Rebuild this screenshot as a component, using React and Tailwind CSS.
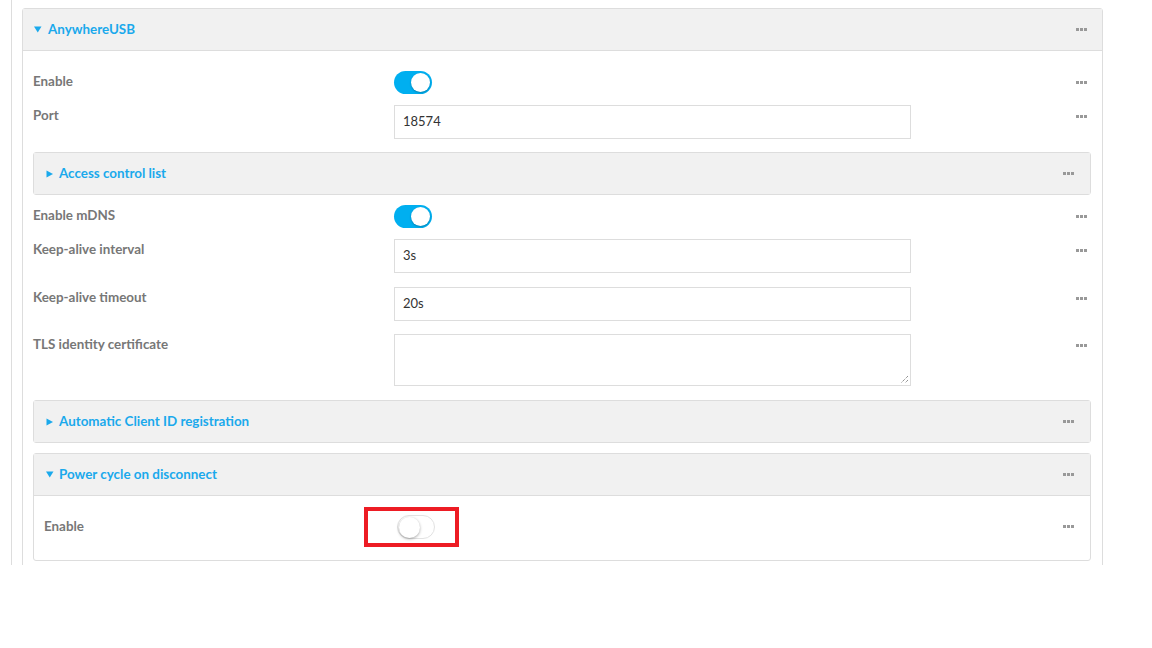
import React from "react";

const font = { fontFamily: "Lato, 'Open Sans', sans-serif" };

function Dots() {
  return (
    <div className="flex gap-px">
      <span className="w-[3px] h-[3px] bg-[#999]" />
      <span className="w-[3px] h-[3px] bg-[#999]" />
      <span className="w-[3px] h-[3px] bg-[#999]" />
    </div>
  );
}

function Tri({ open }) {
  return open ? (
    <svg width="8" height="7" viewBox="0 0 8 7" className="shrink-0">
      <polygon points="0,0.5 7.5,0.5 3.75,6.5" fill="#1aa9ec" />
    </svg>
  ) : (
    <svg width="8" height="8" viewBox="0 0 8 8" className="shrink-0">
      <polygon points="0.5,0.5 7,4 0.5,7.5" fill="#1aa9ec" />
    </svg>
  );
}

function ToggleOn() {
  return (
    <div className="w-[38px] h-[23px] rounded-full bg-[#00aff0] flex items-center justify-end pr-[2px]">
      <div className="w-[19px] h-[19px] rounded-full bg-white shadow-[0_1px_2px_rgba(0,0,0,0.25)]" />
    </div>
  );
}

function ToggleOff() {
  return (
    <div className="w-[38px] h-[24px] rounded-full bg-white border border-[#e2e2e2] flex items-center pl-px">
      <div className="w-[21px] h-[21px] rounded-full bg-white shadow-[0_1px_3px_rgba(0,0,0,0.35)]" />
    </div>
  );
}

function Label({ children }) {
  return <div className="w-[361px] shrink-0 pt-[1px] text-[13.4px] font-bold text-[#777] leading-[18px]">{children}</div>;
}

function SubHeader({ open, title, className = "" }) {
  return (
    <div className={"bg-[#f1f1f1] flex items-center pl-[12px] pr-[16px] " + className}>
      <div className="w-[13px]"><Tri open={open} /></div>
      <span className="text-[#1aa9ec] text-[13.4px] font-bold flex-1">{title}</span>
      <Dots />
    </div>
  );
}

function InputRow({ label, value, mt }) {
  return (
    <div className={"flex pr-[4px] " + mt}>
      <Label>{label}</Label>
      <div className="w-[517px] h-[34px] border border-[#ddd] flex items-center pl-[8px] text-[13px] text-[#333]">{value}</div>
      <div className="flex-1 flex justify-end pt-[10px]"><Dots /></div>
    </div>
  );
}

export default function App() {
  return (
    <div className="w-[1152px] h-[648px] bg-white" style={font}>
      <div className="ml-[11px] h-[565px] border-l border-[#ddd] pl-[10px] pt-[8px] overflow-hidden">
        <div className="w-[1081px] border border-[#ddd] rounded-t-[3px] h-[600px]">
          {/* main header */}
          <div className="h-[42px] bg-[#f1f1f1] border-b border-[#ddd] flex items-center pl-[11px] pr-[15px]">
            <div className="w-[14px]"><Tri open /></div>
            <span className="text-[#1aa9ec] text-[13.4px] font-bold flex-1">AnywhereUSB</span>
            <Dots />
          </div>
          <div className="pl-[10px] pr-[11px] pt-[20px]">
            {/* Enable */}
            <div className="flex items-start">
              <Label>Enable</Label>
              <div className="w-[517px]"><ToggleOn /></div>
              <div className="flex-1 flex justify-end pr-[4px] pt-[10px]"><Dots /></div>
            </div>
            <InputRow label="Port" value="18574" mt="mt-[11px]" />
            {/* Access control list */}
            <div className="mt-[13px] border border-[#ddd] rounded-[3px]">
              <SubHeader title="Access control list" className="h-[41px]" />
            </div>
            {/* Enable mDNS */}
            <div className="flex items-start mt-[10px] pr-[4px]">
              <Label>Enable mDNS</Label>
              <div className="w-[517px]"><ToggleOn /></div>
              <div className="flex-1 flex justify-end pt-[10px]"><Dots /></div>
            </div>
            <InputRow label="Keep-alive interval" value="3s" mt="mt-[11px]" />
            <InputRow label="Keep-alive timeout" value="20s" mt="mt-[14px]" />
            {/* TLS */}
            <div className="flex mt-[13px] pr-[4px]">
              <Label>TLS identity certificate</Label>
              <div className="w-[517px] h-[52px] border border-[#ddd] relative">
                <svg className="absolute right-[1px] bottom-[1px]" width="9" height="9" viewBox="0 0 9 9">
                  <line x1="8" y1="1" x2="1" y2="8" stroke="#666" strokeWidth="1" strokeDasharray="1 1" />
                  <line x1="8" y1="5" x2="5" y2="8" stroke="#666" strokeWidth="1" strokeDasharray="1 1" />
                </svg>
              </div>
              <div className="flex-1 flex justify-end pt-[10px]"><Dots /></div>
            </div>
            {/* Automatic Client ID registration */}
            <div className="mt-[14px] border border-[#ddd] rounded-[3px]">
              <SubHeader title="Automatic Client ID registration" className="h-[41px]" />
            </div>
            {/* Power cycle on disconnect */}
            <div className="mt-[10px] border border-[#ddd] rounded-[3px]">
              <SubHeader open title="Power cycle on disconnect" className="h-[42px] border-b border-[#ddd]" />
              <div className="flex items-start pl-[10px] pr-[16px] pt-[19px] pb-[21px]">
                <div className="w-[353px] shrink-0 pt-[2px] text-[13.4px] font-bold text-[#777] leading-[18px]">Enable</div>
                <div className="w-[517px] relative">
                  <ToggleOff />
                  <div className="absolute left-[-33px] top-[-8px] w-[95px] h-[40px] border-[4px] border-[#ed1c24]" />
                </div>
                <div className="flex-1 flex justify-end pt-[10px]"><Dots /></div>
              </div>
            </div>
          </div>
        </div>
      </div>
    </div>
  );
}
